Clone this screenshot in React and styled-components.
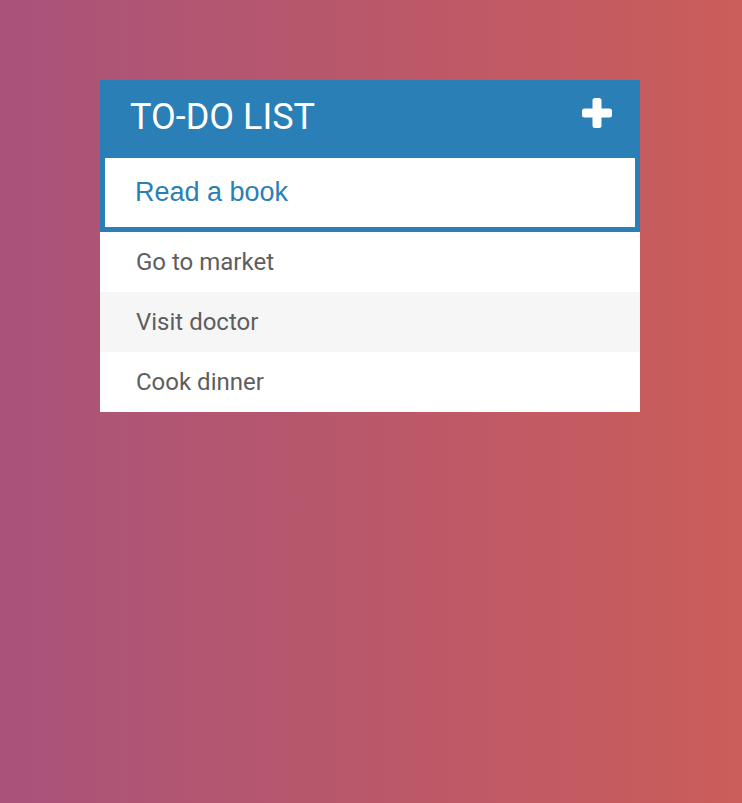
import styled, { createGlobalStyle } from "styled-components";

const GlobalStyle = createGlobalStyle`
  html, body {
    margin: 0;
    padding: 0;
  }
  body {
    font-family: Roboto, "Liberation Sans", sans-serif;
  }
`;

const Page = styled.div`
  min-height: 100vh;
  background: linear-gradient(to right, #a9537a, #cb5d5a);
  padding: 80px 0 0 100px;
  box-sizing: border-box;
`;

const Card = styled.div`
  width: 540px;
  background: #fff;
`;

const Header = styled.div`
  height: 73px;
  background: #2a7fb7;
  display: flex;
  align-items: center;
  justify-content: space-between;
  padding: 0 28px 0 30px;
  box-sizing: border-box;
`;

const Title = styled.h1`
  margin: 0;
  font-family: Roboto, sans-serif;
  font-weight: 400;
  font-size: 36px;
  color: #fff;
  padding-top: 1px;
`;

const AddButton = styled.button`
  background: none;
  border: 0;
  padding: 0;
  display: flex;
  margin-top: -8px;
  cursor: pointer;
`;

const Input = styled.input`
  display: block;
  width: 100%;
  height: 79px;
  box-sizing: border-box;
  border: 5px solid #2a7fb7;
  padding: 0 0 0 30px;
  font-family: "Liberation Sans", Arial, sans-serif;
  font-size: 27px;
  color: #2a7fb7;
  outline: none;
  caret-color: #2a7fb7;
`;

const List = styled.ul`
  list-style: none;
  margin: 0;
  padding: 0;
`;

const Item = styled.li`
  height: 60px;
  display: flex;
  align-items: center;
  padding-left: 36px;
  font-family: Roboto, sans-serif;
  font-size: 24px;
  color: #5e5e5e;
  background: ${(p) => (p.$alt ? "#f6f6f6" : "#fff")};
`;

const PlusIcon = () => (
  <svg width="30" height="30" viewBox="0 0 30 30">
    <rect x="10.5" y="0" width="9" height="30" rx="2.5" fill="#fff" />
    <rect x="0" y="10.5" width="30" height="9" rx="2.5" fill="#fff" />
  </svg>
);

const todos = ["Go to market", "Visit doctor", "Cook dinner"];

export default function App() {
  return (
    <>
      <GlobalStyle />
      <Page>
        <Card>
          <Header>
            <Title>TO-DO LIST</Title>
            <AddButton aria-label="Add">
              <PlusIcon />
            </AddButton>
          </Header>
          <Input defaultValue="Read a book" autoFocus />
          <List>
            {todos.map((t, i) => (
              <Item key={t} $alt={i % 2 === 1}>
                {t}
              </Item>
            ))}
          </List>
        </Card>
      </Page>
    </>
  );
}
